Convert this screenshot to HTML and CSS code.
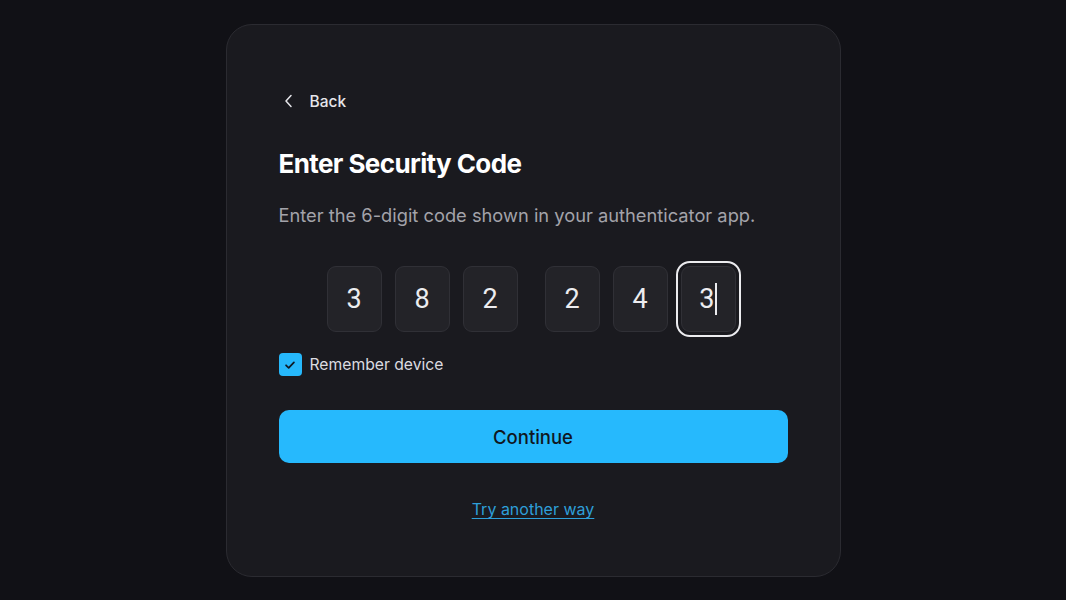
FILE: index.html
```html
<!DOCTYPE html>
<html>
<head>
<meta charset="utf-8">
<link rel="stylesheet" href="styles.css">
</head>
<body>
<main class="card">
  <a class="back" href="#">
    <svg class="back-icon" viewBox="0 0 16 16" width="16" height="16"><path d="M10 2.5 L5 8 L10 13.5" fill="none" stroke="#e6e6ea" stroke-width="1.5" stroke-linecap="round" stroke-linejoin="round"/></svg>
    <span>Back</span>
  </a>
  <h1 class="title">Enter Security Code</h1>
  <p class="subtitle">Enter the 6-digit code shown in your authenticator app.</p>
  <div class="code-row">
    <div class="group">
      <div class="digit">3</div>
      <div class="digit">8</div>
      <div class="digit">2</div>
    </div>
    <div class="group">
      <div class="digit">2</div>
      <div class="digit">4</div>
      <div class="digit focused">3<span class="caret"></span></div>
    </div>
  </div>
  <label class="remember">
    <span class="checkbox">
      <svg viewBox="0 0 16 16" width="14" height="14"><path d="M3.5 8.3 L6.5 11.2 L12.5 5" fill="none" stroke="#0f1a24" stroke-width="2" stroke-linecap="round" stroke-linejoin="round"/></svg>
    </span>
    <span>Remember device</span>
  </label>
  <button class="continue">Continue</button>
  <div class="alt"><a href="#" class="alt-link">Try another way</a></div>
</main>
</body>
</html>
```

FILE: styles.css
```css
* { box-sizing: border-box; }
html, body { margin: 0; height: 100%; }
body {
  background: #111116;
  font-family: Inter, "Noto Sans", sans-serif;
  display: flex;
  justify-content: center;
  padding-top: 24px;
}
.card {
  width: 615px;
  height: 553px;
  background: #1a1a1f;
  border: 1px solid #2b2b31;
  border-radius: 26px;
  padding: 64px 52px 0 52px;
  display: flex;
  flex-direction: column;
}
.back {
  display: flex;
  align-items: center;
  gap: 13px;
  color: #e6e6ea;
  text-decoration: none;
  font-size: 15.5px;
  font-weight: 500;
  height: 24px;
  padding-left: 2px;
}
.back-icon { display: block; }
.title {
  margin: 35px 0 0;
  font-size: 26px;
  font-weight: 700;
  color: #ffffff;
  letter-spacing: -0.6px;
  line-height: 32px;
}
.subtitle {
  margin: 22px 0 0;
  font-size: 18.3px;
  color: #a3a3aa;
  line-height: 26px;
}
.code-row {
  display: flex;
  justify-content: center;
  gap: 27px;
  margin-top: 38px;
  padding-right: 4px;
}
.group { display: flex; gap: 13px; }
.digit {
  width: 55px;
  height: 66px;
  background: #232328;
  border: 1px solid #303036;
  border-radius: 9px;
  display: flex;
  align-items: center;
  justify-content: center;
  font-family: Roboto, Inter, sans-serif;
  font-size: 27px;
  color: #ececef;
}
.digit.focused {
  outline: 2px solid #ececef;
  outline-offset: 3px;
}
.caret {
  display: inline-block;
  width: 1.5px;
  height: 32px;
  background: #ececef;
  margin-left: 1px;
}
.remember {
  display: flex;
  align-items: center;
  gap: 8px;
  margin-top: 21px;
  font-size: 15.7px;
  color: #dcdce0;
  font-weight: 400;
}
.checkbox {
  width: 23px;
  height: 23px;
  border-radius: 4px;
  background: #26b8fb;
  display: flex;
  align-items: center;
  justify-content: center;
}
.checkbox svg { display: block; }
.continue {
  margin-top: 34px;
  height: 53px;
  width: 100%;
  border: none;
  border-radius: 10px;
  background: #26b9fd;
  color: #10171f;
  font-family: Inter, sans-serif;
  font-size: 18.5px;
  font-weight: 500;
}
.alt {
  margin-top: 36px;
  text-align: center;
}
.alt-link {
  color: #2e9fd9;
  font-size: 16px;
  font-weight: 400;
  text-decoration: underline;
  text-underline-offset: 3px;
}
```
